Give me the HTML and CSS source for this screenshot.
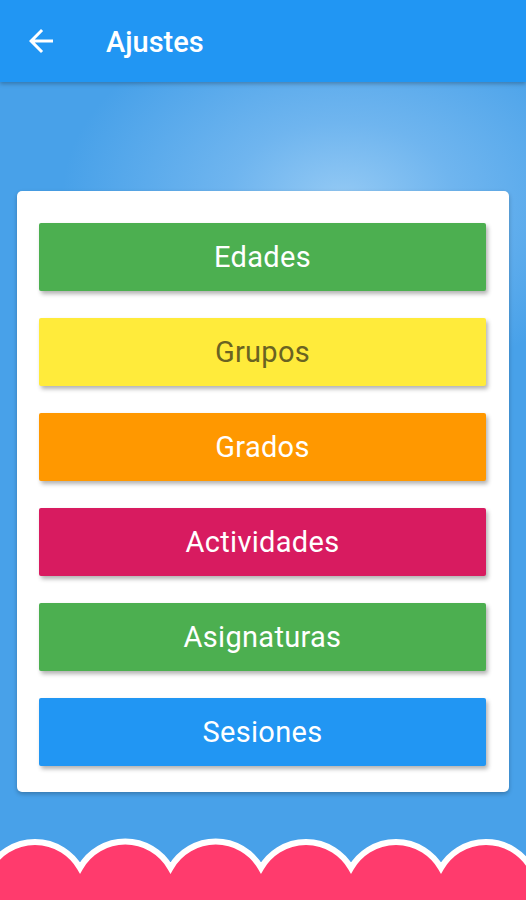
FILE: index.html
```html
<!DOCTYPE html>
<html lang="es">
<head>
    <meta charset="UTF-8">
    <meta name="viewport" content="width=device-width, initial-scale=1.0">
    <title>Ajustes</title>
    <link rel="stylesheet" href="styles.css">
</head>
<body>
    <header class="app-bar">
        <svg class="back-icon" viewBox="0 0 24 24" width="36" height="36">
            <path fill="#fff" d="M20 11H7.83l5.59-5.59L12 4l-8 8 8 8 1.41-1.41L7.83 13H20v-2z"/>
        </svg>
        <h1 class="app-title">Ajustes</h1>
    </header>

    <main class="content">
        <div class="settings-card">
            <button class="menu-btn green">Edades</button>
            <button class="menu-btn yellow">Grupos</button>
            <button class="menu-btn orange">Grados</button>
            <button class="menu-btn pink">Actividades</button>
            <button class="menu-btn green">Asignaturas</button>
            <button class="menu-btn blue">Sesiones</button>
        </div>
    </main>

    <footer class="scallop">
        <svg viewBox="0 0 526 62" width="526" height="62" preserveAspectRatio="none">
            <path fill="#ff3b6d" stroke="#fff" stroke-width="6" stroke-linejoin="miter"
                d="M -10 30 A 52 52 0 0 1 80 30 A 52 52 0 0 1 170.5 30 A 52 52 0 0 1 261 30 A 52 52 0 0 1 351 30 A 52 52 0 0 1 441 30 A 52 52 0 0 1 531 30 L 531 80 L -10 80 Z"/>
        </svg>
    </footer>
</body>
</html>
```

FILE: styles.css
```css
html, body {
    margin: 0;
    padding: 0;
}
body {
    font-family: Roboto, "Noto Sans", Arial, sans-serif;
    width: 526px;
    height: 900px;
    overflow: hidden;
    display: flex;
    flex-direction: column;
    background-color: #48a1e9;
    background-image: radial-gradient(ellipse 280px 190px at 65% 22%, #93c9f4 0%, #6fb5ef 40%, rgba(72, 161, 233, 0) 100%);
}
.app-bar {
    height: 82px;
    flex-shrink: 0;
    background-color: #2196f3;
    display: flex;
    align-items: center;
    box-shadow: 0 2px 4px rgba(0, 0, 0, 0.25);
    position: relative;
    z-index: 1;
}
.back-icon {
    margin-left: 23px;
}
.app-title {
    margin: 0 0 0 47px;
    color: #fff;
    font-size: 29px;
    font-weight: 500;
    padding-top: 2px;
}
.content {
    padding: 109px 17px 0 17px;
}
.settings-card {
    background-color: #fff;
    border-radius: 5px;
    box-shadow: 0 2px 4px rgba(0, 0, 0, 0.25);
    padding: 32px 23px 26px 22px;
    display: flex;
    flex-direction: column;
    gap: 27px;
}
.menu-btn {
    height: 68px;
    border: none;
    border-radius: 2px;
    font-family: Roboto, "Noto Sans", Arial, sans-serif;
    font-size: 29px;
    letter-spacing: 0.3px;
    color: #fff;
    box-shadow: 2px 3px 4px rgba(0, 0, 0, 0.3);
    cursor: pointer;
    padding: 0;
}
.green {
    background-color: #4caf50;
}
.yellow {
    background-color: #ffeb3b;
    color: #6a6322;
}
.orange {
    background-color: #ff9800;
}
.pink {
    background-color: #d81b60;
}
.blue {
    background-color: #2196f3;
}
.scallop {
    margin-top: auto;
    height: 62px;
    line-height: 0;
}
```
